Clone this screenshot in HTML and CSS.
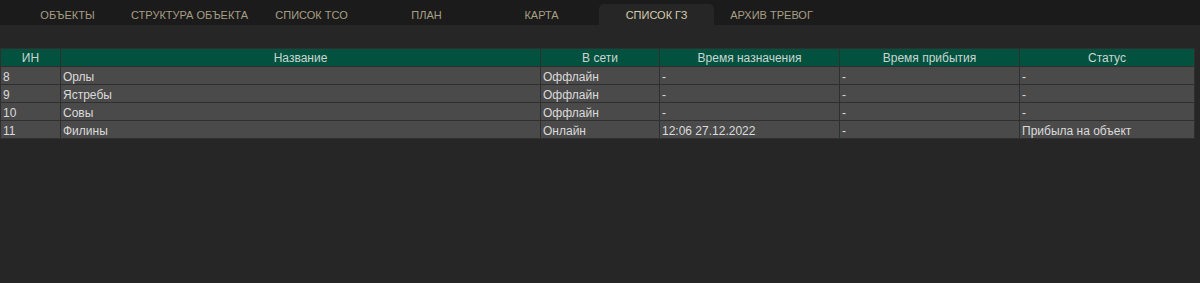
FILE: index.html
```html
<!DOCTYPE html>
<html lang="ru">
<head>
    <meta charset="UTF-8">
    <meta name="viewport" content="width=device-width, initial-scale=1.0">
    <title>Список ГЗ</title>
    <link rel="stylesheet" href="styles.css">
</head>
<body>

<div class="tabs">
    <div class="tab">Объекты</div>
    <div class="tab">Структура объекта</div>
    <div class="tab">Список ТСО</div>
    <div class="tab">План</div>
    <div class="tab">Карта</div>
    <div class="tab active">Список ГЗ</div>
    <div class="tab">Архив тревог</div>
</div>

<div class="content">
    <table class="groups">
        <colgroup>
            <col style="width:60px">
            <col style="width:480px">
            <col style="width:119px">
            <col style="width:180px">
            <col style="width:180px">
            <col>
        </colgroup>
        <thead>
            <tr>
                <th>ИН</th>
                <th>Название</th>
                <th>В сети</th>
                <th>Время назначения</th>
                <th>Время прибытия</th>
                <th>Статус</th>
            </tr>
        </thead>
        <tbody>
            <tr>
                <td>8</td>
                <td>Орлы</td>
                <td>Оффлайн</td>
                <td>-</td>
                <td>-</td>
                <td>-</td>
            </tr>
            <tr>
                <td>9</td>
                <td>Ястребы</td>
                <td>Оффлайн</td>
                <td>-</td>
                <td>-</td>
                <td>-</td>
            </tr>
            <tr>
                <td>10</td>
                <td>Совы</td>
                <td>Оффлайн</td>
                <td>-</td>
                <td>-</td>
                <td>-</td>
            </tr>
            <tr>
                <td>11</td>
                <td>Филины</td>
                <td>Онлайн</td>
                <td>12:06 27.12.2022</td>
                <td>-</td>
                <td>Прибыла на объект</td>
            </tr>
        </tbody>
    </table>
</div>

</body>
</html>
```

FILE: styles.css
```css
body {
    margin: 0;
    background-color: #262626;
    font-family: "Liberation Sans", Arial, sans-serif;
    height: 100vh;
}

.tabs {
    display: flex;
    align-items: flex-end;
    height: 25px;
    padding-left: 10px;
    background-color: #1b1b1b;
}

.tab {
    min-width: 115px;
    height: 21px;
    padding: 0 6px;
    box-sizing: border-box;
    display: flex;
    align-items: center;
    justify-content: center;
    font-size: 11px;
    text-transform: uppercase;
    color: #a89f84;
    border-radius: 5px 5px 0 0;
}

.tab.active {
    background-color: #262626;
    color: #d6ccae;
}

.content {
    padding: 23px 5px 0 0;
}

.groups {
    width: 100%;
    border-collapse: collapse;
    table-layout: fixed;
    font-size: 12px;
}

.groups th,
.groups td {
    height: 17px;
    padding: 0 2px;
    border: 1px solid #2f2f2f;
    white-space: nowrap;
    overflow: hidden;
}

.groups th {
    background-color: #03513f;
    color: #c9d6d1;
    font-weight: normal;
    text-align: center;
}

.groups td {
    background-color: #4a4a4a;
    color: #dadada;
    text-align: left;
    vertical-align: bottom;
}
```
